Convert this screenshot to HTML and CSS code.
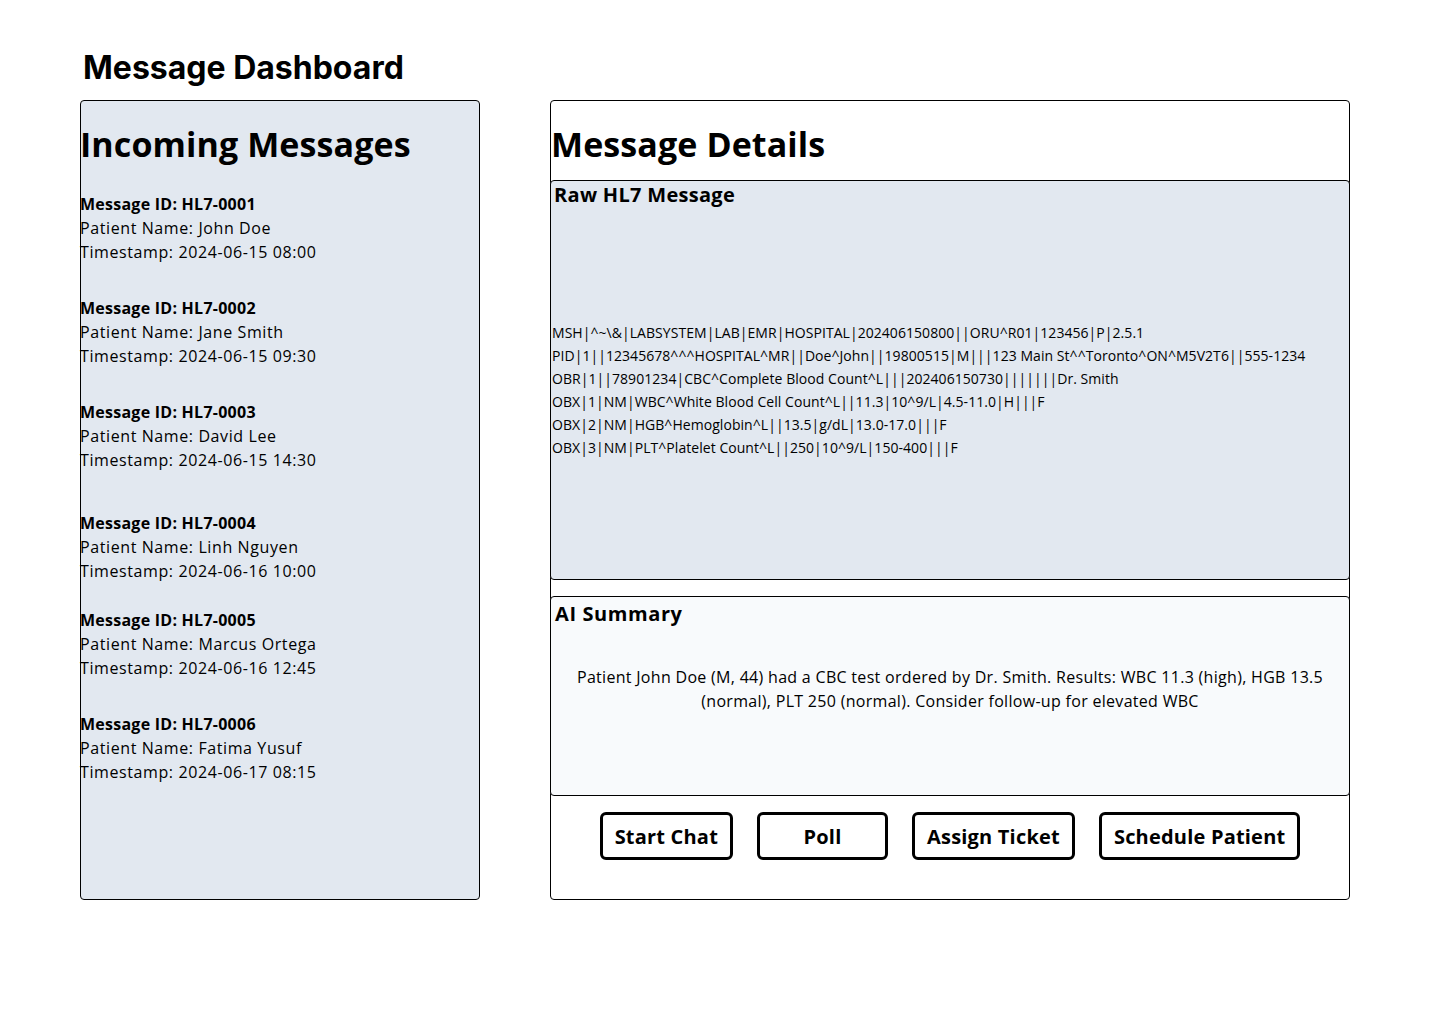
FILE: index.html
```html
<!DOCTYPE html>
<html lang="en">
<head>
<meta charset="utf-8">
<title>Message Dashboard</title>
<link rel="stylesheet" href="styles.css">
</head>
<body>
<div class="page">
  <h1 class="page-title">Message Dashboard</h1>
  <div class="columns">
    <section class="panel incoming">
      <h2 class="panel-title">Incoming Messages</h2>
      <ul class="message-list">
        <li class="message-item">
          <div class="msg-id">Message ID: HL7-0001</div>
          <div class="msg-line">Patient Name: John Doe</div>
          <div class="msg-line">Timestamp: 2024-06-15 08:00</div>
        </li>
        <li class="message-item">
          <div class="msg-id">Message ID: HL7-0002</div>
          <div class="msg-line">Patient Name: Jane Smith</div>
          <div class="msg-line">Timestamp: 2024-06-15 09:30</div>
        </li>
        <li class="message-item">
          <div class="msg-id">Message ID: HL7-0003</div>
          <div class="msg-line">Patient Name: David Lee</div>
          <div class="msg-line">Timestamp: 2024-06-15 14:30</div>
        </li>
        <li class="message-item">
          <div class="msg-id">Message ID: HL7-0004</div>
          <div class="msg-line">Patient Name: Linh Nguyen</div>
          <div class="msg-line">Timestamp: 2024-06-16 10:00</div>
        </li>
        <li class="message-item">
          <div class="msg-id">Message ID: HL7-0005</div>
          <div class="msg-line">Patient Name: Marcus Ortega</div>
          <div class="msg-line">Timestamp: 2024-06-16 12:45</div>
        </li>
        <li class="message-item">
          <div class="msg-id">Message ID: HL7-0006</div>
          <div class="msg-line">Patient Name: Fatima Yusuf</div>
          <div class="msg-line">Timestamp: 2024-06-17 08:15</div>
        </li>
      </ul>
    </section>
    <section class="panel details">
      <h2 class="panel-title">Message Details</h2>
      <div class="raw-box">
        <h3 class="box-title raw-title">Raw HL7 Message</h3>
        <div class="raw-body">
          <div class="raw-text">MSH|^~\&amp;|LABSYSTEM|LAB|EMR|HOSPITAL|202406150800||ORU^R01|123456|P|2.5.1
PID|1||12345678^^^HOSPITAL^MR||Doe^John||19800515|M|||123 Main St^^Toronto^ON^M5V2T6||555-1234
OBR|1||78901234|CBC^Complete Blood Count^L|||202406150730|||||||Dr. Smith
OBX|1|NM|WBC^White Blood Cell Count^L||11.3|10^9/L|4.5-11.0|H|||F
OBX|2|NM|HGB^Hemoglobin^L||13.5|g/dL|13.0-17.0|||F
OBX|3|NM|PLT^Platelet Count^L||250|10^9/L|150-400|||F</div>
        </div>
      </div>
      <div class="summary-box">
        <h3 class="box-title summary-title">AI Summary</h3>
        <p class="summary-text">Patient John Doe (M, 44) had a CBC test ordered by Dr. Smith. Results: WBC 11.3 (high), HGB 13.5 (normal), PLT 250 (normal). Consider follow-up for elevated WBC</p>
      </div>
      <div class="actions">
        <button class="action-btn">Start Chat</button>
        <button class="action-btn">Poll</button>
        <button class="action-btn">Assign Ticket</button>
        <button class="action-btn">Schedule Patient</button>
      </div>
    </section>
  </div>
</div>
</body>
</html>
```

FILE: styles.css
```css
* {
  box-sizing: border-box;
}

html, body {
  margin: 0;
  padding: 0;
  background: #ffffff;
  color: #000000;
}

body {
  font-family: "Open Sans", "Noto Sans", "Liberation Sans", sans-serif;
  font-size: 16px;
}

.page {
  padding: 48px 80px 0 80px;
}

.page-title {
  font-family: Inter, "Liberation Sans", sans-serif;
  font-weight: 700;
  font-size: 32px;
  line-height: 40px;
  margin: 0 0 12px 3px;
}

.columns {
  display: flex;
  gap: 70px;
  align-items: flex-start;
}

.panel {
  border: 1px solid #000;
  border-radius: 4px;
  height: 800px;
  padding-top: 19px;
}

.incoming {
  width: 400px;
  background: #e2e8f0;
}

.details {
  width: 800px;
  background: #ffffff;
  display: flex;
  flex-direction: column;
}

.panel-title {
  margin: 0;
  font-weight: 700;
  font-size: 34px;
  line-height: 48px;
  letter-spacing: 0.1px;
}

.incoming .panel-title {
  margin-bottom: 24px;
  margin-left: -1px;
}

.details .panel-title {
  margin-bottom: 12px;
}

.message-list {
  list-style: none;
  margin: 0 0 0 -1px;
  padding: 0;
}

.message-item {
  line-height: 24px;
  margin-bottom: 32px;
}

.message-item:nth-child(3) {
  margin-bottom: 39px;
}

.message-item:nth-child(4) {
  margin-bottom: 25px;
}

.msg-id {
  font-weight: 700;
  letter-spacing: 0.25px;
}

.msg-line {
  letter-spacing: 0.6px;
}

.raw-box {
  height: 400px;
  margin: 0 -1px;
  border: 1px solid #000;
  border-radius: 4px;
  background: #e2e8f0;
  display: flex;
  flex-direction: column;
}

.box-title {
  margin: 0;
  font-weight: 700;
  font-size: 20px;
  line-height: 28px;
}

.raw-title {
  padding: 0 3px;
  letter-spacing: 0.3px;
}

.raw-body {
  flex: 1;
  display: flex;
  align-items: center;
  padding-bottom: 8px;
}

.raw-text {
  white-space: pre;
  font-size: 14px;
  line-height: 23px;
  letter-spacing: 0.05px;
  padding-left: 1px;
}

.summary-box {
  height: 200px;
  margin: 16px -1px 0 -1px;
  border: 1px solid #000;
  border-radius: 4px;
  background: #f8fafc;
}

.summary-title {
  padding: 3px 4px 0 4px;
  letter-spacing: 0.6px;
}

.summary-text {
  margin: 37px 0 0 0;
  padding: 0 20px;
  text-align: center;
  line-height: 24px;
  letter-spacing: 0.3px;
}

.actions {
  margin-top: 16px;
  display: flex;
  justify-content: center;
  gap: 24px;
}

.action-btn {
  font-family: "Open Sans", "Noto Sans", "Liberation Sans", sans-serif;
  font-weight: 700;
  font-size: 20px;
  letter-spacing: 0.2px;
  height: 48px;
  min-width: 131px;
  padding: 0 12px;
  border: 3px solid #000;
  border-radius: 6px;
  background: #ffffff;
  color: #000;
  cursor: pointer;
}
```
